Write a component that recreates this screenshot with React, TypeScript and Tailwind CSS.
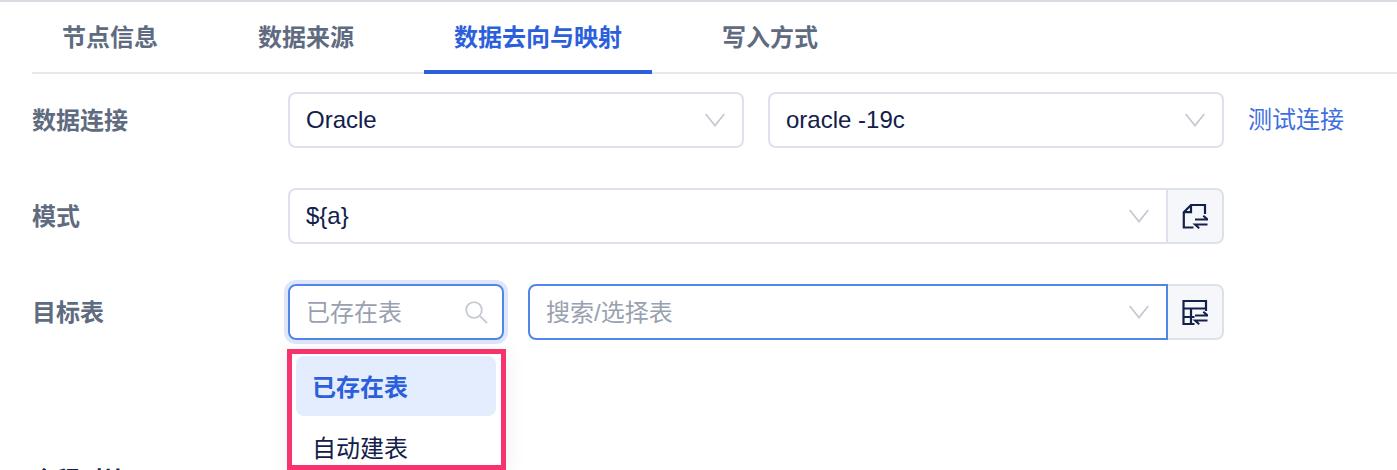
const FONT = "font-['Liberation_Sans','Noto_Sans_CJK_SC',sans-serif]";

const TABS = ["节点信息", "数据来源", "数据去向与映射", "写入方式"];

const Caret = () => (
  <svg width="20" height="14" viewBox="0 0 20 14" className="shrink-0">
    <path d="M.7 1 10 12.6 19.3 1" fill="none" stroke="#c5cad3" strokeWidth="1.8" />
  </svg>
);

const SearchIcon = () => (
  <svg width="24" height="24" viewBox="0 0 24 24" className="shrink-0">
    <circle cx="10" cy="10" r="7.8" fill="none" stroke="#c5cad3" strokeWidth="1.8" />
    <path d="m15.8 15.8 7.2 7.2" fill="none" stroke="#c5cad3" strokeWidth="1.8" />
  </svg>
);

const SwapArrows = () => (
  <path d="M13 16.5h12.5l-4.2-3.8M25.5 21.5H13l4.2 3.8" fill="none" stroke="#12204a" strokeWidth="2" />
);

const SchemaIcon = () => (
  <svg width="26" height="26" viewBox="0 0 26 26" className="shrink-0">
    <path d="M11.5 24.5H1.8V9.2L9 2h14v9M9 2v7.2H1.8" fill="none" stroke="#12204a" strokeWidth="2.2" />
    <SwapArrows />
  </svg>
);

const TableIcon = () => (
  <svg width="26" height="26" viewBox="0 0 26 26" className="shrink-0">
    <path d="M12.5 25H1.5V2h22.5v10M1.5 9.5H24M1.5 18h11M9 9.5V25" fill="none" stroke="#12204a" strokeWidth="2.2" />
    <SwapArrows />
  </svg>
);

const Row = ({ label, children }: { label: string; children: React.ReactNode }) => (
  <div className="flex items-center h-14">
    <div className="w-64 shrink-0 pt-px text-[24px] font-bold text-[#5f6b80]">{label}</div>
    {children}
  </div>
);

export default function App() {
  return (
    <div className={`${FONT} h-[470px] overflow-hidden bg-white border-t-2 border-[#d8dce3] pl-8 text-[24px] text-[#12204a]`}>
      <div className="flex gap-10 h-[72px] border-b-2 border-[#e5e8ed]">
        {TABS.map((t, i) => (
          <div
            key={t}
            className={`px-[30px] h-[72px] pt-[16px] leading-[40px] font-bold whitespace-nowrap ${i === 2 ? "text-[#2b5fdc] border-b-4 border-[#2b5fdc]" : "text-[#5f6b80]"}`}
          >
            {t}
          </div>
        ))}
      </div>

      <div className="mt-[18px] flex flex-col gap-10">
        <Row label="数据连接">
          <div className="flex items-center justify-between w-[456px] h-14 pl-4 pr-[17px] border-2 border-[#dde1ea] rounded-lg">
            <span>Oracle</span>
            <Caret />
          </div>
          <div className="ml-6 flex items-center justify-between w-[456px] h-14 pl-4 pr-[17px] border-2 border-[#dde1ea] rounded-lg">
            <span>oracle -19c</span>
            <Caret />
          </div>
          <span className="ml-6 text-[#3f6fdf]">测试连接</span>
        </Row>

        <Row label="模式">
          <div className="flex w-[936px] h-14">
            <div className="flex-1 flex items-center justify-between pl-4 pr-[17px] border-2 border-[#dde1ea] rounded-l-lg">
              <span>{"${a}"}</span>
              <Caret />
            </div>
            <div className="w-14 flex items-center justify-center bg-[#f6f7fb] border-2 border-l-0 border-[#dde1ea] rounded-r-lg">
              <SchemaIcon />
            </div>
          </div>
        </Row>

        <Row label="目标表">
          <div className="relative w-[216px] h-14">
            <div className="flex items-center justify-between h-14 pl-4 pr-[14px] border-2 border-[#5086e8] rounded-lg ring-4 ring-[#dfe6fa]">
              <span className="pt-px text-[#98a1b0]">已存在表</span>
              <SearchIcon />
            </div>
            {/* 下拉菜单 */}
            <div className="absolute left-[-1px] top-[65px] w-[219px] h-[121px] overflow-hidden bg-white border-[5px] border-[#f7336d] pl-1 pr-[5px] pt-[2px] shadow-[0_4px_20px_rgba(0,0,0,0.08)] z-10">
              <div className="h-[60px] leading-[63px] pl-4 rounded-lg bg-[#e4edfd] font-bold text-[#2b5fdc]">已存在表</div>
              <div className="mt-[2px] h-[60px] leading-[62px] pl-4">自动建表</div>
            </div>
          </div>
          <div className="ml-6 flex w-[696px] h-14">
            <div className="flex-1 flex items-center justify-between pl-4 pr-[17px] border-2 border-[#5086e8] rounded-l-lg">
              <span className="pt-px text-[#98a1b0]">搜索/选择表</span>
              <Caret />
            </div>
            <div className="w-14 flex items-center justify-center bg-[#f6f7fb] border-2 border-l-0 border-[#dde1ea] rounded-r-lg">
              <TableIcon />
            </div>
          </div>
        </Row>

        <div className="mt-[85px] text-[24px] font-bold leading-[32px]">全程对比</div>
      </div>
    </div>
  );
}
